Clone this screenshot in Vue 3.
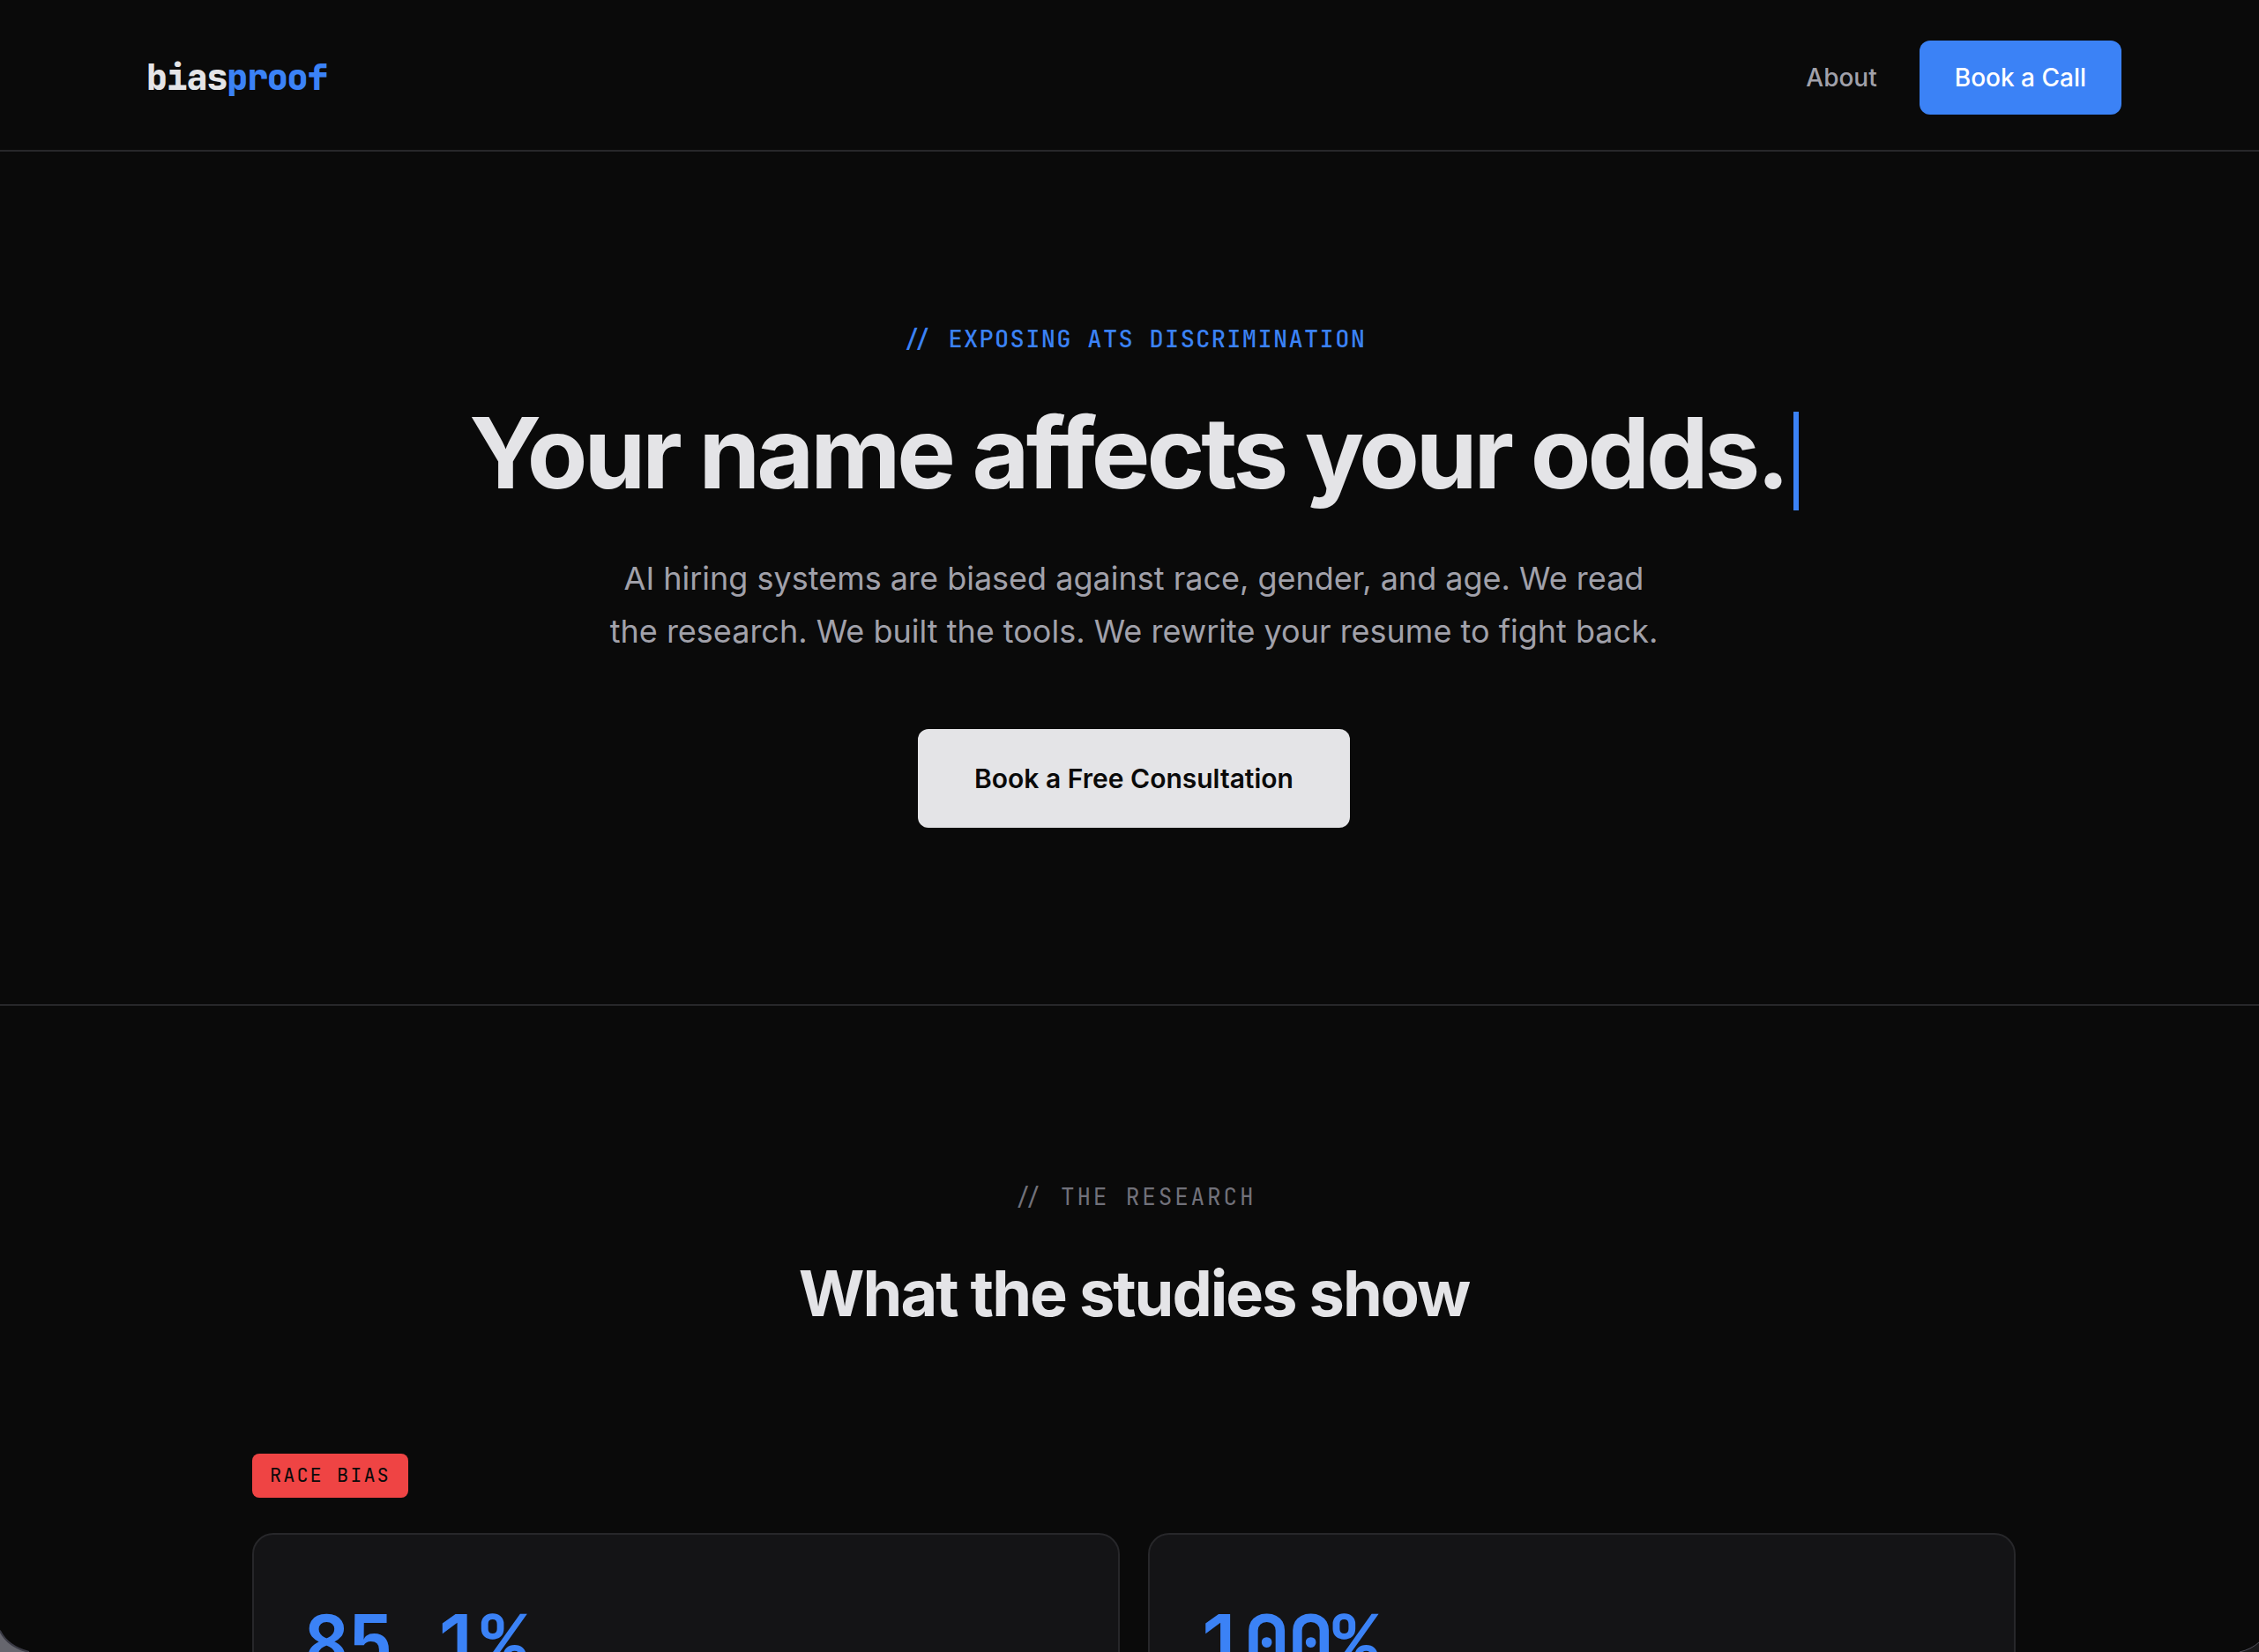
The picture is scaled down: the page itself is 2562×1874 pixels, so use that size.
<script setup>
const stats = [
  { value: '85.1%' },
  { value: '100%' },
]
</script>

<template>
  <div class="page">
    <header class="nav">
      <div class="nav-inner">
        <a class="logo" href="#">bias<span>proof</span></a>
        <nav class="links">
          <a class="link" href="#about">About</a>
          <a class="call" href="#call">Book a Call</a>
        </nav>
      </div>
    </header>

    <main>
      <section class="hero">
        <p class="eyebrow">// EXPOSING ATS DISCRIMINATION</p>
        <h1>Your name affects your odds.<span class="cursor"></span></h1>
        <p class="lead">
          AI hiring systems are biased against race, gender, and age. We read
          the research. We built the tools. We rewrite your resume to fight back.
        </p>
        <a class="cta" href="#consultation">Book a Free Consultation</a>
      </section>

      <section class="research">
        <p class="label">// THE RESEARCH</p>
        <h2>What the studies show</h2>
        <div class="group">
          <span class="badge">RACE BIAS</span>
          <div class="cards">
            <article v-for="stat in stats" :key="stat.value" class="card">
              <p class="stat">{{ stat.value }}</p>
            </article>
          </div>
        </div>
      </section>
    </main>

    <svg class="corner left" width="36" height="26" viewBox="0 0 36 26" aria-hidden="true">
      <path d="M0 1Q9 20 33 26H0Z" fill="#66666e" />
      <path d="M0 2Q9 20 33 26" fill="none" stroke="#3a3a44" stroke-width="2" />
    </svg>
    <svg class="corner right" width="24" height="12" viewBox="0 0 24 12" aria-hidden="true">
      <path d="M24 1Q15 9 2 12H24Z" fill="#1a1a1c" />
      <path d="M24 1Q15 9 2 12" fill="none" stroke="#50505a" stroke-width="1" />
    </svg>
  </div>
</template>

<style>
body {
  margin: 0;
  background: #0a0a0a;
}
</style>

<style scoped>
.page {
  height: 100vh;
  overflow: hidden;
  background: #0a0a0a;
  color: #e4e4e7;
  font-family: Inter, "Liberation Sans", sans-serif;
}

h1,
h2,
p {
  margin: 0;
}

a {
  color: inherit;
  text-decoration: none;
}

.nav {
  padding: 46px 40px 40px 50px;
  border-bottom: 2px solid #27272a;
}

.nav-inner {
  display: flex;
  align-items: center;
  justify-content: space-between;
  max-width: 2240px;
  margin: 0 auto;
}

.logo,
.eyebrow,
.label,
.badge,
.stat {
  font-family: "JetBrains Mono", "DejaVu Sans Mono", monospace;
}

.logo {
  font-size: 40px;
  line-height: 52px;
  font-weight: 800;
  letter-spacing: -0.03em;
}

.logo span {
  color: #3b82f6;
}

.links {
  display: flex;
  align-items: center;
  gap: 48px;
  font-size: 28px;
  line-height: 44px;
  font-weight: 500;
}

.link {
  color: #a1a1aa;
}

.call {
  padding: 20px 40px;
  border-radius: 12px;
  background: #3b82f6;
  color: #fff;
}

.hero {
  display: flex;
  flex-direction: column;
  align-items: center;
  padding: 190px 40px 200px 50px;
  border-bottom: 2px solid #27272a;
  text-align: center;
}

/* keeps the joined double slash on letter-spaced text */
.eyebrow,
.label {
  font-feature-settings: "calt" 1, "liga" 1;
}

.eyebrow {
  font-size: 27px;
  line-height: 44px;
  font-weight: 500;
  letter-spacing: 0.05em;
  color: #3b82f6;
}

h1 {
  margin-top: 45px;
  font-size: 112px;
  line-height: 124px;
  font-weight: 700;
  letter-spacing: -4px;
}

.cursor {
  display: inline-block;
  width: 6px;
  height: 112px;
  margin-left: 8px;
  background: #3b82f6;
  vertical-align: -25px;
}

.lead {
  max-width: 1200px;
  margin-top: 47px;
  font-size: 36px;
  line-height: 60px;
  color: #a1a1aa;
}

.cta {
  margin-top: 81px;
  padding: 32px 64px;
  border-radius: 12px;
  background: #e4e4e7;
  color: #0a0a0a;
  font-size: 30px;
  line-height: 48px;
  font-weight: 600;
}

.research {
  padding: 195px 40px 0 50px;
  text-align: center;
}

.label {
  font-size: 26px;
  line-height: 44px;
  letter-spacing: 0.11em;
  color: #71717a;
}

h2 {
  margin-top: 43px;
  font-size: 72px;
  line-height: 88px;
  font-weight: 700;
  letter-spacing: -2px;
}

.group {
  display: flex;
  flex-direction: column;
  align-items: flex-start;
  gap: 40px;
  max-width: 2000px;
  margin: 138px auto 0;
}

.badge {
  padding: 8px 20px;
  border-radius: 8px;
  background: #ef4444;
  color: #0a0a0a;
  font-size: 22px;
  line-height: 34px;
  letter-spacing: 2px;
}

.cards {
  display: grid;
  grid-template-columns: 1fr 1fr;
  gap: 32px;
  width: 100%;
}

.card {
  padding: 72px 56px;
  border: 2px solid #27272a;
  border-radius: 24px;
  background: #141416;
  text-align: left;
}

.stat {
  font-size: 88px;
  line-height: 100px;
  font-weight: 700;
  letter-spacing: -0.03em;
  color: #3b82f6;
}

.corner {
  position: fixed;
  bottom: 0;
}

.left {
  left: 0;
}

.right {
  right: 0;
}
</style>
